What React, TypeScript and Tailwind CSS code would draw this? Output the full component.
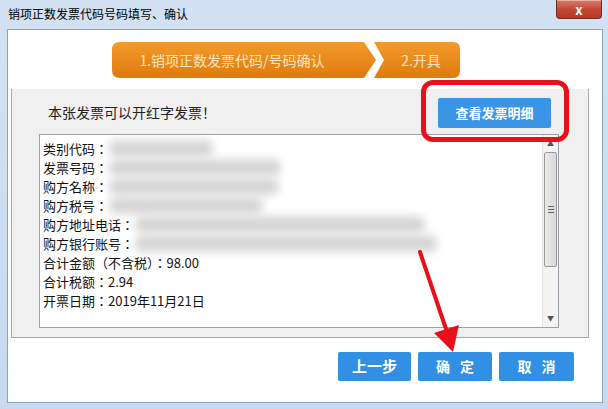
import React from "react";

const font = { fontFamily: '"Noto Sans CJK SC", "Microsoft YaHei", sans-serif' };
const fontTC = { fontFamily: '"Noto Sans CJK TC", "Noto Sans CJK SC", sans-serif' };

export default function App() {
  const rows: { label: string; value?: string; blob?: string }[] = [
    { label: "类别代码：", blob: "w-[104px]" },
    { label: "发票号码：", blob: "w-[172px]" },
    { label: "购方名称：", blob: "w-[170px]" },
    { label: "购方税号：", blob: "w-[154px]" },
    { label: "购方地址电话：", blob: "w-[290px]" },
    { label: "购方银行账号：", blob: "w-[302px]" },
    { label: "合计金额（不含税）：", value: "98.00" },
    { label: "合计税额：", value: "2.94" },
    { label: "开票日期：", value: "2019年11月21日" },
  ];
  return (
    <div
      className="relative w-[608px] h-[409px] overflow-hidden flex flex-col bg-gradient-to-b from-[#d2e2f3] to-[#c6d9ee] text-[#1a1a1a]"
      style={font}
    >
      {/* title bar */}
      <div className="h-[29px] flex items-start justify-between">
        <div className="pl-[8px] pt-[6px] text-[12px] leading-[16px] text-black">销项正数发票代码号码填写、确认</div>
        <div className="mr-[6px] w-[46px] h-[19px] rounded-b-[4px] border border-t-0 border-[#6e2b22] bg-gradient-to-b from-[#d77b6b] via-[#c44a38] to-[#b53a28] flex items-center justify-center text-white text-[13px] font-bold leading-none shadow-[inset_0_1px_0_rgba(255,255,255,0.4)]">
          x
        </div>
      </div>
      {/* client area */}
      <div className="flex-1 ml-[7px] mr-[5px] mb-[6px] bg-white border border-[#8ea3bd] flex flex-col">
        {/* steps banner */}
        <div className="pt-[12px] pl-[104px] flex items-center h-[48px]">
          <div className="relative h-[36px] w-[264px] flex">
            <svg width="264" height="36" className="absolute inset-0">
              <defs>
                <linearGradient id="og" x1="0" y1="0" x2="0" y2="1">
                  <stop offset="0" stopColor="#f29b2c" />
                  <stop offset="1" stopColor="#e07a0d" />
                </linearGradient>
              </defs>
              <path d="M8 0 H252 L264 18 L252 36 H8 Q0 36 0 28 V8 Q0 0 8 0 Z" fill="url(#og)" />
            </svg>
            <span className="relative w-full pr-[24px] text-center leading-[36px] text-[14px] text-[#fde5bf]">1.销项正数发票代码/号码确认</span>
          </div>
          <div className="relative h-[36px] w-[86px] ml-[-2px] flex">
            <svg width="86" height="36" className="absolute inset-0">
              <path d="M0 0 H79 Q86 0 86 7 V29 Q86 36 79 36 H0 L10 18 Z" fill="url(#og)" />
            </svg>
            <span className="relative w-full pl-[8px] text-center leading-[36px] text-[14px] text-[#fde5bf]">2.开具</span>
          </div>
        </div>
        {/* gray group */}
        <div className="ml-[3px] mr-[13px] mt-[11px] h-[249px] bg-[#f0f0f0] border-l border-r border-b border-[#a7a7a7] flex flex-col">
          <div className="flex items-center justify-between pt-[8px] h-[39px]">
            <span className="pl-[36px] text-[14px] text-[#222]">本张发票可以开红字发票！</span>
            <div className="mr-[37px] w-[113px] h-[30px] bg-[#3b95e6] rounded-[2px] flex items-center justify-center text-white text-[13px] font-bold">
              查看发票明细
            </div>
          </div>
          <div className="ml-[27px] mr-[29px] mt-[6px] h-[194px] bg-white border border-[#9aa0a8] flex">
            <div className="flex-1 pl-[3px] pt-[4px] flex flex-col text-[13px] leading-[19px] text-[#111]" style={fontTC}>
              {rows.map((r) => (
                <div key={r.label} className="flex items-center h-[19px]">
                  <span>{r.label}</span>
                  {r.value && <span>{r.value}</span>}
                  {r.blob && (
                    <span className={`${r.blob} h-[17px] ml-[1px] rounded-[7px] bg-[#d6d6d6] blur-[4px]`} />
                  )}
                </div>
              ))}
            </div>
            <div className="w-[16px] bg-[#f3f3f3] border-l border-[#e4e4e4] flex flex-col items-center">
              <div className="h-[17px] flex items-center justify-center text-[#555] text-[7px]">▲</div>
              <div className="w-[13px] h-[115px] rounded-[2px] border border-[#9a9a9a] bg-gradient-to-r from-[#eaeaea] to-[#d8d8d8] flex items-center justify-center">
                <div className="flex flex-col gap-[2px]">
                  <div className="w-[6px] h-px bg-[#666]" />
                  <div className="w-[6px] h-px bg-[#666]" />
                  <div className="w-[6px] h-px bg-[#666]" />
                </div>
              </div>
              <div className="flex-1" />
              <div className="h-[17px] flex items-center justify-center text-[#555] text-[7px]">▼</div>
            </div>
          </div>
        </div>
        {/* buttons */}
        <div className="flex justify-end gap-[7px] mr-[28px] mt-[14px]">
          <div className="w-[73px] h-[29px] bg-[#3190e3] rounded-[2px] flex items-center justify-center text-white text-[15px] font-bold">上一步</div>
          <div className="w-[74px] h-[29px] bg-[#3190e3] rounded-[2px] flex items-center justify-center text-white text-[14px] font-bold tracking-[10px] pl-[10px]">确定</div>
          <div className="w-[75px] h-[29px] bg-[#3190e3] rounded-[2px] flex items-center justify-center text-white text-[14px] font-bold tracking-[10px] pl-[10px]">取消</div>
        </div>
      </div>
      {/* red highlight box */}
      <div className="absolute left-[421px] top-[80px] w-[148px] h-[62px] border-[5px] border-[#e8101a] rounded-[12px]" />
      {/* red arrow */}
      <svg className="absolute left-0 top-0" width="608" height="409">
        <line x1="420" y1="252" x2="447" y2="332" stroke="#e8101a" strokeWidth="4" strokeLinecap="round" />
        <polygon points="453,352 434,333 459,325" fill="#e8101a" />
      </svg>
    </div>
  );
}
